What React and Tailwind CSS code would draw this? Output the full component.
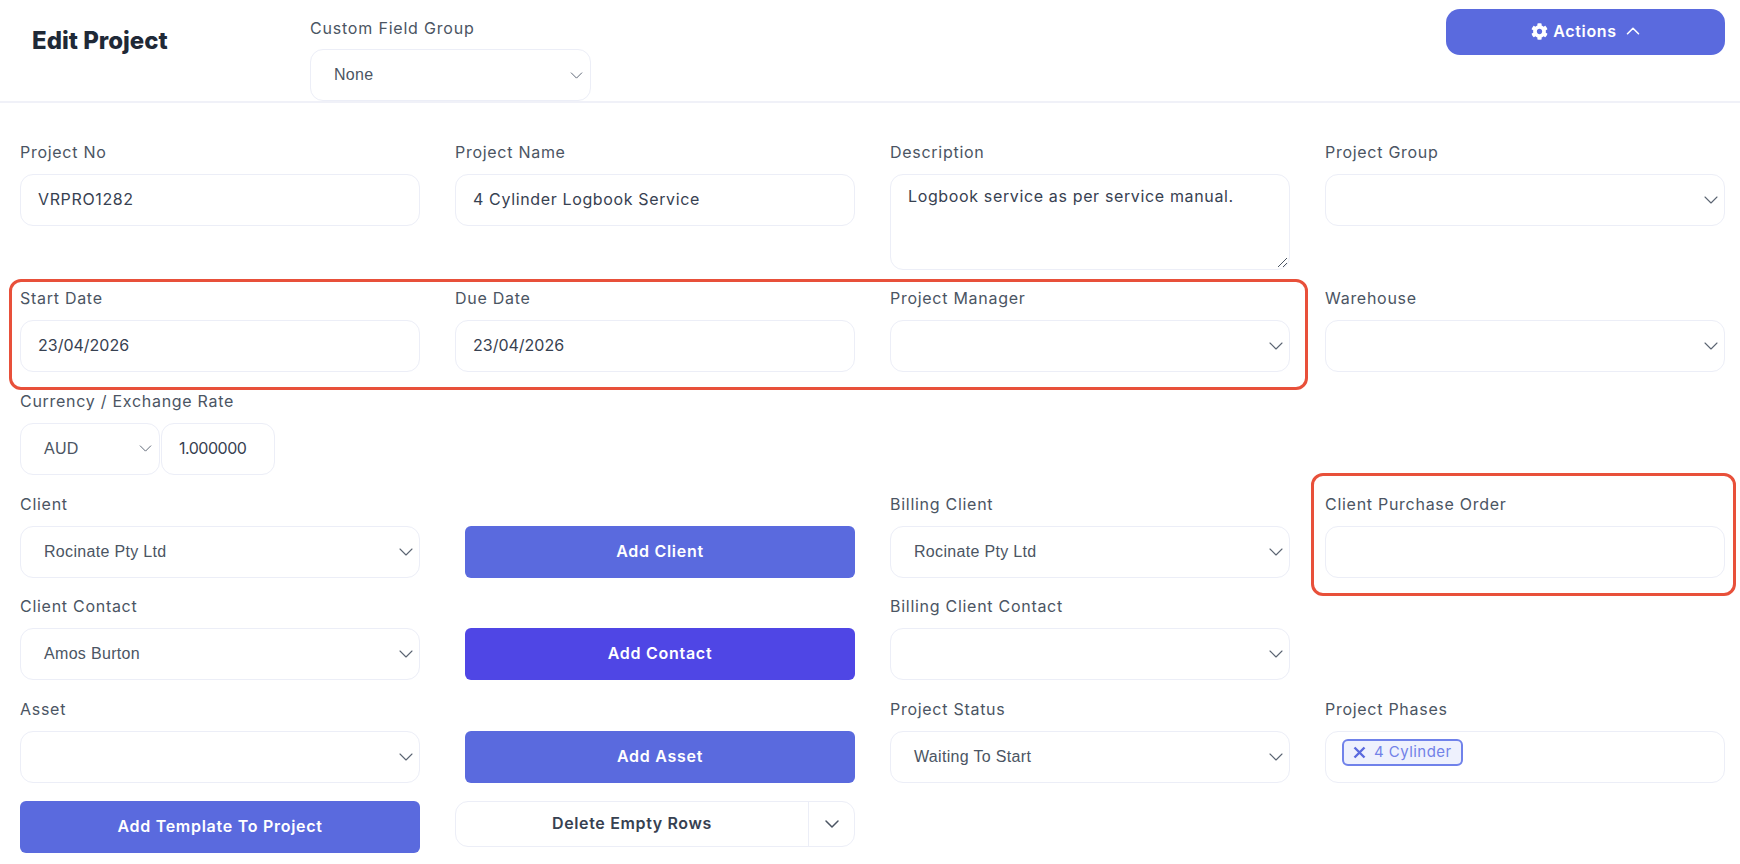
import React from "react";
import { ChevronUp } from "lucide-react";
import { FaCog } from "react-icons/fa";

const boxCls = "h-[52px] rounded-[13px] border border-[#eceef7] bg-white flex items-center";
const labelCls = "h-[22px] mb-[11px] text-[16px] leading-[22px] tracking-[0.045em] text-[#4b5563] whitespace-nowrap";
const valueCls = "text-[16px] tracking-[0.04em] text-[#374151] pb-[2px]";
const numberCls = "text-[16px] tracking-[0] text-[#374151] pb-[2px]";
const rateCls = "text-[16px] tracking-[-0.03em] text-[#374151] pb-[2px]";
const selectCls = "text-[16px] text-[#4b5563] font-['Liberation_Sans',sans-serif] tracking-[0.02em]";

function Label({ children }) {
  return <div className={labelCls}>{children}</div>;
}

function Chevron({ small = false }) {
  const size = small ? 21 : 24;
  return (
    <svg className={`shrink-0 ${small ? "mr-[2px]" : ""}`} width={size} height={size} viewBox="0 0 24 24" fill="none" stroke="#5b6472" strokeWidth="1.1" strokeLinecap="round" strokeLinejoin="round">
      <path d="M6 9l6 6 6-6" />
    </svg>
  );
}

function InputField({ label, value, valueClass = valueCls }) {
  return (
    <div>
      <Label>{label}</Label>
      <div className={`${boxCls} pl-[17px]`}>
        <span className={valueClass}>{value}</span>
      </div>
    </div>
  );
}

function SelectBox({ value, className = "", small = false }) {
  return (
    <div className={`${boxCls} pr-[1px] justify-between ${className}`}>
      <span className={selectCls}>{value}</span>
      <Chevron small={small} />
    </div>
  );
}

function SelectField({ label, value }) {
  return (
    <div>
      <Label>{label}</Label>
      <SelectBox value={value} className="pl-[23px]" />
    </div>
  );
}

function ActionButton({ children, color = "bg-[#5a6ade]", inset = true }) {
  return (
    <div className={inset ? "pt-[33px] pl-[10px]" : ""}>
      <div className={`h-[52px] rounded-[6px] ${color} flex items-center justify-center text-white text-[16px] font-semibold tracking-[0.045em] pb-[2px]`}>
        {children}
      </div>
    </div>
  );
}

export default function App() {
  return (
    <div className="relative w-[1740px] h-[864px] overflow-hidden bg-white font-['Inter',sans-serif]">
      <header className="h-[103px] border-b-2 border-[#f0f1f8] flex justify-between pl-[32px] pr-[15px]">
        <div className="flex">
          <h1 className="w-[278px] pt-[25px] text-[24px] leading-[32px] font-extrabold text-[#1f2937] tracking-[0]">Edit Project</h1>
          <div className="pt-[17px]">
            <div className="h-[22px] mb-[10px] text-[16px] leading-[22px] tracking-[0.05em] text-[#4b5563]">Custom Field Group</div>
            <SelectBox value="None" small className="w-[281px] pl-[23px]" />
          </div>
        </div>
        <div className="pt-[9px]">
          <div className="w-[279px] h-[46px] rounded-[14px] bg-[#5a6ade] flex items-center justify-center gap-[5px] text-white text-[16px] font-semibold tracking-[0.04em] pb-[2px] pl-[4px]">
            <FaCog className="w-[17px] h-[17px]" />
            <span>Actions</span>
            <ChevronUp className="w-[22px] h-[22px]" strokeWidth={1.75} />
          </div>
        </div>
      </header>

      <main className="pt-[38px] pl-[20px] pr-[15px] grid grid-cols-4 gap-x-[35px] gap-y-[17.67px]">
        <InputField label="Project No" value="VRPRO1282" />
        <InputField label="Project Name" value="4 Cylinder Logbook Service" />
        <div>
          <Label>Description</Label>
          <div className="relative h-[95.66px] rounded-[13px] border border-[#eceef7] pl-[17px] pt-[9px]">
            <span className={valueCls}>Logbook service as per service manual.</span>
            <svg className="absolute right-[1px] bottom-[1px]" width="12" height="12" viewBox="0 0 12 12" fill="none" stroke="#4b5563" strokeWidth="1">
              <path d="M2 11L11 2M7 11L11 7" />
            </svg>
          </div>
        </div>
        <SelectField label="Project Group" value="" />

        <InputField label="Start Date" value="23/04/2026" valueClass={numberCls} />
        <InputField label="Due Date" value="23/04/2026" valueClass={numberCls} />
        <SelectField label="Project Manager" value="" />
        <SelectField label="Warehouse" value="" />

        <div className="col-span-4">
          <Label>Currency / Exchange Rate</Label>
          <div className="flex gap-[1px]">
            <SelectBox value="AUD" small className="w-[140px] pl-[23px]" />
            <div className={`${boxCls} w-[114px] pl-[17px]`}>
              <span className={rateCls}>1.000000</span>
            </div>
          </div>
        </div>

        <SelectField label="Client" value="Rocinate Pty Ltd" />
        <ActionButton>Add Client</ActionButton>
        <SelectField label="Billing Client" value="Rocinate Pty Ltd" />
        <InputField label="Client Purchase Order" value="" />

        <SelectField label="Client Contact" value="Amos Burton" />
        <ActionButton color="bg-[#4f46e5]">Add Contact</ActionButton>
        <SelectField label="Billing Client Contact" value="" />
        <div />

        <SelectField label="Asset" value="" />
        <ActionButton>Add Asset</ActionButton>
        <SelectField label="Project Status" value="Waiting To Start" />
        <div>
          <Label>Project Phases</Label>
          <div className={`${boxCls} !items-start pl-[16px] pt-[7px]`}>
            <div className="h-[27px] w-[121px] rounded-[6px] border-2 border-[#7082ea] bg-[#eef1fd] flex items-center pl-[9px] gap-[8px] text-[#7282e8] text-[15px] tracking-[0.03em]">
              <svg className="shrink-0" width="13" height="13" viewBox="0 0 13 13" fill="none" stroke="#5a6ade" strokeWidth="2.4">
                <path d="M1.5 1.5l10 10M11.5 1.5l-10 10" />
              </svg>
              <span>4 Cylinder</span>
            </div>
          </div>
        </div>

        <ActionButton inset={false}>Add Template To Project</ActionButton>
        <div className="h-[46px] rounded-[13px] border border-[#eceef7] flex">
          <div className="flex-1 flex items-center justify-center text-[16px] font-semibold tracking-[0.04em] text-[#374151] pb-[2px]">Delete Empty Rows</div>
          <div className="w-[46px] border-l border-[#eceef7] flex items-center justify-center">
            <svg width="24" height="24" viewBox="0 0 24 24" fill="none" stroke="#4b5563" strokeWidth="1.5" strokeLinecap="round" strokeLinejoin="round">
              <path d="M6 9l6 6 6-6" />
            </svg>
          </div>
        </div>
      </main>

      <div className="absolute left-[9px] top-[279px] w-[1299px] h-[111px] rounded-[12px] border-[3.5px] border-[#e8503a] pointer-events-none" />
      <div className="absolute left-[1311px] top-[473px] w-[425px] h-[123px] rounded-[12px] border-[3.5px] border-[#e8503a] pointer-events-none" />
    </div>
  );
}
